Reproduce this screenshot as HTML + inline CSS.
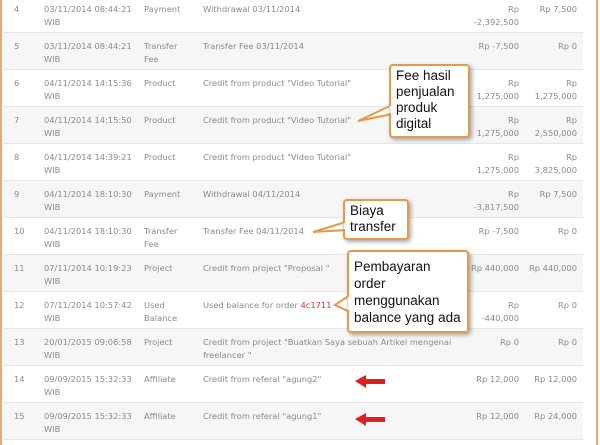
<!DOCTYPE html>
<html><head><meta charset="utf-8"><style>
body{margin:0;width:600px;height:445px;overflow:hidden;background:#fff;font-family:"DejaVu Sans","Liberation Sans",sans-serif;font-size:8.3px;color:#8a8a8a;position:relative}
.frame{position:absolute;left:0;top:0;width:598px;height:445px;border-left:2px solid #e8a878;border-right:2px solid #e8a878;box-sizing:border-box}
.row{position:absolute;left:3px;width:580px;height:37px;border-bottom:1px solid #e6e6e6;box-sizing:border-box}
.g{background:#f6f6f6}
.c{position:absolute;top:7px;line-height:12.5px}
.n{left:11px}.d{left:41px}.t{left:141px}.s{left:200px}
.a{right:64px;text-align:right}.b{right:6px;text-align:right}
.red{color:#c0392b}
.co{position:absolute;background:#fff;border:2px solid #e59a4a;border-radius:4px;box-shadow:2px 2px 4px rgba(0,0,0,.35);font-family:"Liberation Sans",Arial,sans-serif;font-size:13.5px;line-height:16px;color:#111;padding:2px 5px;box-sizing:border-box}
</style></head><body>
<div class="frame"></div>
<div class="row" style="top:-4px"><div class="c n">4</div><div class="c d">03/11/2014 08:44:21<br>WIB</div><div class="c t">Payment</div><div class="c s">Withdrawal 03/11/2014</div><div class="c a">Rp<br>-2,392,500</div><div class="c b">Rp 7,500</div></div>
<div class="row g" style="top:33px"><div class="c n">5</div><div class="c d">03/11/2014 08:44:21<br>WIB</div><div class="c t">Transfer<br>Fee</div><div class="c s">Transfer Fee 03/11/2014</div><div class="c a">Rp -7,500</div><div class="c b">Rp 0</div></div>
<div class="row" style="top:70px"><div class="c n">6</div><div class="c d">04/11/2014 14:15:36<br>WIB</div><div class="c t">Product</div><div class="c s">Credit from product "Video Tutorial"</div><div class="c a">Rp<br>1,275,000</div><div class="c b">Rp<br>1,275,000</div></div>
<div class="row g" style="top:107px"><div class="c n">7</div><div class="c d">04/11/2014 14:15:50<br>WIB</div><div class="c t">Product</div><div class="c s">Credit from product "Video Tutorial"</div><div class="c a">Rp<br>1,275,000</div><div class="c b">Rp<br>2,550,000</div></div>
<div class="row" style="top:144px"><div class="c n">8</div><div class="c d">04/11/2014 14:39:21<br>WIB</div><div class="c t">Product</div><div class="c s">Credit from product "Video Tutorial"</div><div class="c a">Rp<br>1,275,000</div><div class="c b">Rp<br>3,825,000</div></div>
<div class="row g" style="top:181px"><div class="c n">9</div><div class="c d">04/11/2014 18:10:30<br>WIB</div><div class="c t">Payment</div><div class="c s">Withdrawal 04/11/2014</div><div class="c a">Rp<br>-3,817,500</div><div class="c b">Rp 7,500</div></div>
<div class="row" style="top:218px"><div class="c n">10</div><div class="c d">04/11/2014 18:10:30<br>WIB</div><div class="c t">Transfer<br>Fee</div><div class="c s">Transfer Fee 04/11/2014</div><div class="c a">Rp -7,500</div><div class="c b">Rp 0</div></div>
<div class="row g" style="top:255px"><div class="c n">11</div><div class="c d">07/11/2014 10:19:23<br>WIB</div><div class="c t">Project</div><div class="c s">Credit from project "Proposal "</div><div class="c a">Rp 440,000</div><div class="c b">Rp 440,000</div></div>
<div class="row" style="top:292px"><div class="c n">12</div><div class="c d">07/11/2014 10:57:42<br>WIB</div><div class="c t">Used<br>Balance</div><div class="c s">Used balance for order <span class="red">4c1711</span></div><div class="c a">Rp<br>-440,000</div><div class="c b">Rp 0</div></div>
<div class="row g" style="top:329px"><div class="c n">13</div><div class="c d">20/01/2015 09:06:58<br>WIB</div><div class="c t">Project</div><div class="c s">Credit from project "Buatkan Saya sebuah Artikel mengenai<br>freelancer "</div><div class="c a">Rp 0</div><div class="c b">Rp 0</div></div>
<div class="row" style="top:366px"><div class="c n">14</div><div class="c d">09/09/2015 15:32:33<br>WIB</div><div class="c t">Affiliate</div><div class="c s">Credit from referal "agung2"</div><div class="c a">Rp 12,000</div><div class="c b">Rp 12,000</div></div>
<div class="row g" style="top:403px"><div class="c n">15</div><div class="c d">09/09/2015 15:32:33<br>WIB</div><div class="c t">Affiliate</div><div class="c s">Credit from referal "agung1"</div><div class="c a">Rp 12,000</div><div class="c b">Rp 24,000</div></div>

<svg style="position:absolute;left:0;top:0" width="600" height="445">
<polygon points="392,105 358,121 392,114" fill="#fff" stroke="#e59a4a" stroke-width="2"/>
<polygon points="346,222 313,232 346,230" fill="#fff" stroke="#e59a4a" stroke-width="2"/>
<polygon points="350,295 335,305 350,312" fill="#fff" stroke="#e59a4a" stroke-width="2"/>
<g fill="#e02020"><polygon points="355,381 366,375 366,379 385,379 385,384 366,384 366,388"/><polygon points="355,419 366,413 366,417 385,417 385,422 366,422 366,426"/></g>
</svg>
<div class="co" style="left:389px;top:64px;width:81px;height:74px">Fee hasil<br>penjualan<br>produk<br>digital</div>
<div class="co" style="left:343px;top:199px;width:66px;height:41px">Biaya<br>transfer</div>
<div class="co" style="left:347px;top:250px;width:122px;height:83px;padding-top:6px;line-height:17px">Pembayaran<br>order<br>menggunakan<br>balance yang ada</div>
<svg style="position:absolute;left:0;top:0" width="600" height="445">
<line x1="391" y1="106" x2="391" y2="113" stroke="#fff" stroke-width="3"/>
<line x1="345" y1="223" x2="345" y2="229" stroke="#fff" stroke-width="3"/>
<line x1="349" y1="297" x2="349" y2="310" stroke="#fff" stroke-width="3"/>
</svg>
</body></html>
